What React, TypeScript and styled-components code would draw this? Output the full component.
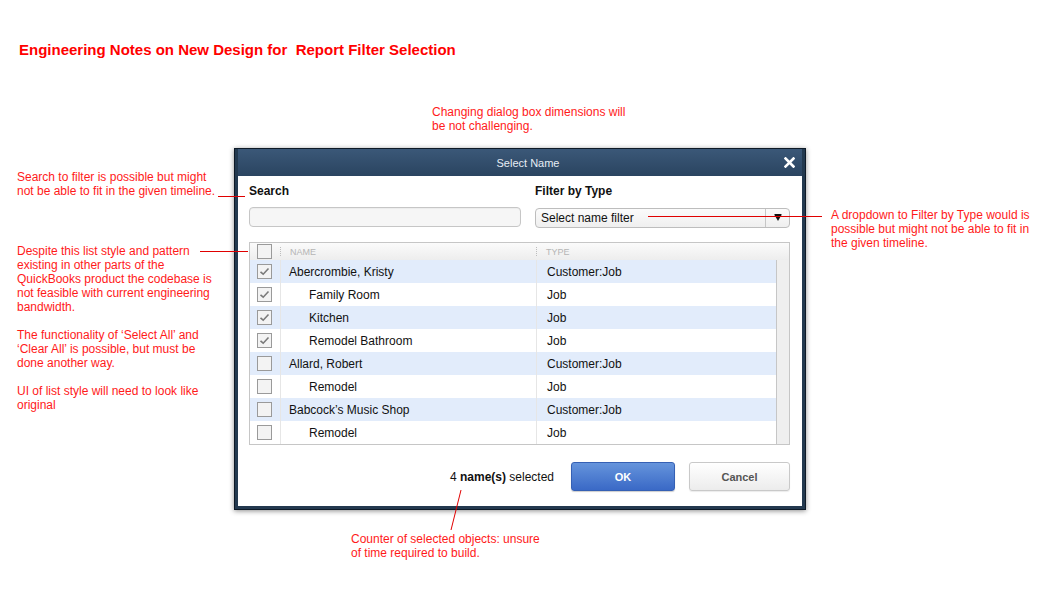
import React from "react";
import styled, { createGlobalStyle } from "styled-components";

const Global = createGlobalStyle`
  html, body { margin: 0; padding: 0; background: #fff; }
  body { font-family: "Liberation Sans", Arial, sans-serif; }
`;

const Canvas = styled.div`
  position: relative;
  width: 1064px;
  height: 616px;
  overflow: hidden;
  background: #fff;
`;

const PageTitle = styled.h1`
  position: absolute;
  left: 19px;
  top: 41px;
  margin: 0;
  font-size: 15px;
  line-height: 17px;
  font-weight: bold;
  color: #ff0000;
  white-space: pre;
`;

const Note = styled.div<{ $x: number; $y: number; $w: number }>`
  position: absolute;
  left: ${(p) => p.$x}px;
  top: ${(p) => p.$y}px;
  width: ${(p) => p.$w}px;
  font-size: 12px;
  line-height: 14px;
  color: #ff1a1a;
  p { margin: 0 0 14px 0; }
  p:last-child { margin-bottom: 0; }
`;

const Connectors = styled.svg`
  position: absolute;
  left: 0;
  top: 0;
  width: 1064px;
  height: 616px;
  pointer-events: none;
  z-index: 5;
`;

const Dialog = styled.div`
  position: absolute;
  left: 234px;
  top: 148px;
  width: 564px;
  height: 357px;
  display: flex;
  flex-direction: column;
  background: #23394f;
  border: 1px solid #0e1a27;
  padding: 0 3px 3px 3px;
  box-shadow: 0 1px 5px rgba(0, 0, 0, 0.45);
`;

const TitleBar = styled.div`
  position: relative;
  height: 27px;
  flex: none;
  display: flex;
  align-items: center;
  justify-content: center;
  padding-left: 16px;
  background: linear-gradient(#3b5878, #2a4460);
  color: #e6edf5;
  font-size: 11px;
`;

const CloseButton = styled.svg`
  position: absolute;
  right: 7px;
  top: 8px;
  width: 11px;
  height: 11px;
`;

const Body = styled.div`
  flex: 1;
  background: #fff;
  padding: 8px 12px 0 11px;
  display: flex;
  flex-direction: column;
`;

const FieldsRow = styled.div`
  display: grid;
  grid-template-columns: 272px 1fr;
  column-gap: 14px;
`;

const Field = styled.div`
  display: flex;
  flex-direction: column;
`;

const Label = styled.div`
  font-size: 12px;
  font-weight: bold;
  line-height: 14px;
  color: #111;
  height: 14px;
  margin-bottom: 9px;
`;

const SearchBox = styled.div`
  height: 18px;
  border: 1px solid #c6c6c6;
  border-radius: 4px;
  background: #f6f6f6;
  box-shadow: inset 0 1px 1px rgba(0, 0, 0, 0.04);
`;

const Select = styled.div`
  height: 18px;
  margin-top: 1px;
  border: 1px solid #bdbdbd;
  border-radius: 4px;
  background: linear-gradient(#fbfbfb, #efefef);
  display: flex;
  align-items: center;
  font-size: 12px;
  color: #111;
`;

const SelectText = styled.span`
  flex: 1;
  padding-left: 5px;
`;

const SelectArrow = styled.span`
  width: 23px;
  height: 100%;
  border-left: 1px solid #c6c6c6;
  display: flex;
  align-items: center;
  justify-content: center;
`;

const Table = styled.div`
  margin-top: 14px;
  border: 1px solid #c6c6c6;
  display: flex;
  flex-direction: column;
`;

const HeaderRow = styled.div`
  height: 17px;
  display: grid;
  grid-template-columns: 30px 256px 1fr;
  align-items: center;
  background: linear-gradient(#fbfbfb, #ededed);
`;

const HeaderCell = styled.div`
  position: relative;
  height: 100%;
  display: flex;
  align-items: center;
  padding-left: 10px;
  font-size: 9px;
  color: #b5b5b5;
  &::before {
    content: "";
    position: absolute;
    left: 0;
    top: 4px;
    bottom: 3px;
    width: 1px;
    background-image: linear-gradient(#bdbdbd 50%, transparent 50%);
    background-size: 1px 2px;
  }
`;

const CheckCell = styled.div`
  display: flex;
  align-items: center;
  padding-left: 7px;
  height: 100%;
`;

const ListArea = styled.div`
  display: flex;
`;

const Rows = styled.div`
  flex: 1;
  display: flex;
  flex-direction: column;
`;

const Row = styled.div<{ $shaded: boolean }>`
  height: 23px;
  display: grid;
  grid-template-columns: 30px 256px 1fr;
  align-items: stretch;
  background: ${(p) => (p.$shaded ? "#e2ecfb" : "#fff")};
  font-size: 12px;
  color: #111;
`;

const NameCell = styled.div<{ $indent: boolean }>`
  display: flex;
  align-items: center;
  padding-left: ${(p) => (p.$indent ? 28 : 8)}px;
  border-left: 1px solid #e6e6e6;
`;

const TypeCell = styled.div`
  display: flex;
  align-items: center;
  padding-left: 10px;
  border-left: 1px solid #e6e6e6;
`;

const Scrollbar = styled.div`
  width: 12px;
  flex: none;
  background: #efefef;
  border-left: 1px solid #c6c6c6;
`;

const Box = styled.span`
  width: 13px;
  height: 13px;
  border: 1px solid #9a9a9a;
  background: #f3f3f3;
  display: inline-flex;
  align-items: center;
  justify-content: center;
  box-sizing: content-box;
`;

const Footer = styled.div`
  flex: 1;
  display: flex;
  align-items: center;
  justify-content: flex-end;
  padding-top: 2px;
`;

const Counter = styled.div`
  font-size: 12px;
  color: #111;
  margin-right: 17px;
  b { font-weight: bold; }
`;

const Button = styled.button<{ $primary?: boolean }>`
  height: 29px;
  width: ${(p) => (p.$primary ? 104 : 101)}px;
  margin-left: ${(p) => (p.$primary ? 0 : 14)}px;
  border-radius: 3px;
  font-family: "Liberation Sans", Arial, sans-serif;
  font-size: 11px;
  font-weight: bold;
  cursor: pointer;
  border: 1px solid ${(p) => (p.$primary ? "#3560b4" : "#c9c9c9")};
  color: ${(p) => (p.$primary ? "#fff" : "#555")};
  background: ${(p) =>
    p.$primary
      ? "linear-gradient(#6594dc, #3a69c6)"
      : "linear-gradient(#ffffff, #ececec)"};
  box-shadow: ${(p) =>
    p.$primary ? "0 1px 1px rgba(0,0,0,0.2)" : "0 1px 1px rgba(0,0,0,0.08)"};
`;

const Check = () => (
  <svg width="11" height="9" viewBox="0 0 11 9">
    <path d="M1.5 4.8 L4.2 7.2 L9.5 1.5" fill="none" stroke="#7a7a7a" strokeWidth="1.6" />
  </svg>
);

const CheckBox = ({ checked }: { checked?: boolean }) => (
  <Box>{checked ? <Check /> : null}</Box>
);

const rows = [
  { name: "Abercrombie, Kristy", type: "Customer:Job", indent: false, checked: true },
  { name: "Family Room", type: "Job", indent: true, checked: true },
  { name: "Kitchen", type: "Job", indent: true, checked: true },
  { name: "Remodel Bathroom", type: "Job", indent: true, checked: true },
  { name: "Allard, Robert", type: "Customer:Job", indent: false, checked: false },
  { name: "Remodel", type: "Job", indent: true, checked: false },
  { name: "Babcock\u2019s Music Shop", type: "Customer:Job", indent: false, checked: false },
  { name: "Remodel", type: "Job", indent: true, checked: false },
];

export default function App() {
  return (
    <Canvas>
      <Global />
      <PageTitle>Engineering Notes on New Design for  Report Filter Selection</PageTitle>

      <Note $x={432} $y={105} $w={220}>
        Changing dialog box dimensions will
        <br />
        be not challenging.
      </Note>

      <Note $x={17} $y={170} $w={215}>
        Search to filter is possible but might
        <br />
        not be able to fit in the given timeline.
      </Note>

      <Note $x={17} $y={244} $w={215}>
        <p>
          Despite this list style and pattern
          <br />
          existing in other parts of the
          <br />
          QuickBooks product the codebase is
          <br />
          not feasible with current engineering
          <br />
          bandwidth.
        </p>
        <p>
          The functionality of ‘Select All’ and
          <br />
          ‘Clear All’ is possible, but must be
          <br />
          done another way.
        </p>
        <p>
          UI of list style will need to look like
          <br />
          original
        </p>
      </Note>

      <Note $x={831} $y={208} $w={220}>
        A dropdown to Filter by Type would is
        <br />
        possible but might not be able to fit in
        <br />
        the given timeline.
      </Note>

      <Note $x={351} $y={532} $w={220}>
        Counter of selected objects: unsure
        <br />
        of time required to build.
      </Note>

      <Dialog>
        <TitleBar>
          Select Name
          <CloseButton viewBox="0 0 11 11">
            <path d="M1.5 1.5 L9.5 9.5 M9.5 1.5 L1.5 9.5" stroke="#fff" strokeWidth="2.6" strokeLinecap="square" />
          </CloseButton>
        </TitleBar>
        <Body>
          <FieldsRow>
            <Field>
              <Label>Search</Label>
              <SearchBox />
            </Field>
            <Field>
              <Label>Filter by Type</Label>
              <Select>
                <SelectText>Select name filter</SelectText>
                <SelectArrow>
                  <svg width="8" height="8" viewBox="0 0 8 8">
                    <path d="M0.5 1 H7.5 L4 7 Z" fill="#111" />
                    <rect x="0.5" y="0" width="7" height="1.2" fill="#111" />
                  </svg>
                </SelectArrow>
              </Select>
            </Field>
          </FieldsRow>

          <Table>
            <HeaderRow>
              <CheckCell>
                <CheckBox />
              </CheckCell>
              <HeaderCell>NAME</HeaderCell>
              <HeaderCell>TYPE</HeaderCell>
            </HeaderRow>
            <ListArea>
              <Rows>
                {rows.map((r, i) => (
                  <Row key={i} $shaded={i % 2 === 0}>
                    <CheckCell>
                      <CheckBox checked={r.checked} />
                    </CheckCell>
                    <NameCell $indent={r.indent}>{r.name}</NameCell>
                    <TypeCell>{r.type}</TypeCell>
                  </Row>
                ))}
              </Rows>
              <Scrollbar />
            </ListArea>
          </Table>

          <Footer>
            <Counter>
              4 <b>name(s)</b> selected
            </Counter>
            <Button $primary>OK</Button>
            <Button>Cancel</Button>
          </Footer>
        </Body>
      </Dialog>

      <Connectors viewBox="0 0 1064 616">
        <line x1="218" y1="196.5" x2="245" y2="196.5" stroke="#e00000" strokeWidth="1" />
        <line x1="200" y1="251.5" x2="248" y2="251.5" stroke="#e00000" strokeWidth="1" />
        <line x1="648" y1="216.5" x2="822" y2="216.5" stroke="#e00000" strokeWidth="1" />
        <line x1="461" y1="490" x2="451" y2="530" stroke="#e00000" strokeWidth="1" />
      </Connectors>
    </Canvas>
  );
}
